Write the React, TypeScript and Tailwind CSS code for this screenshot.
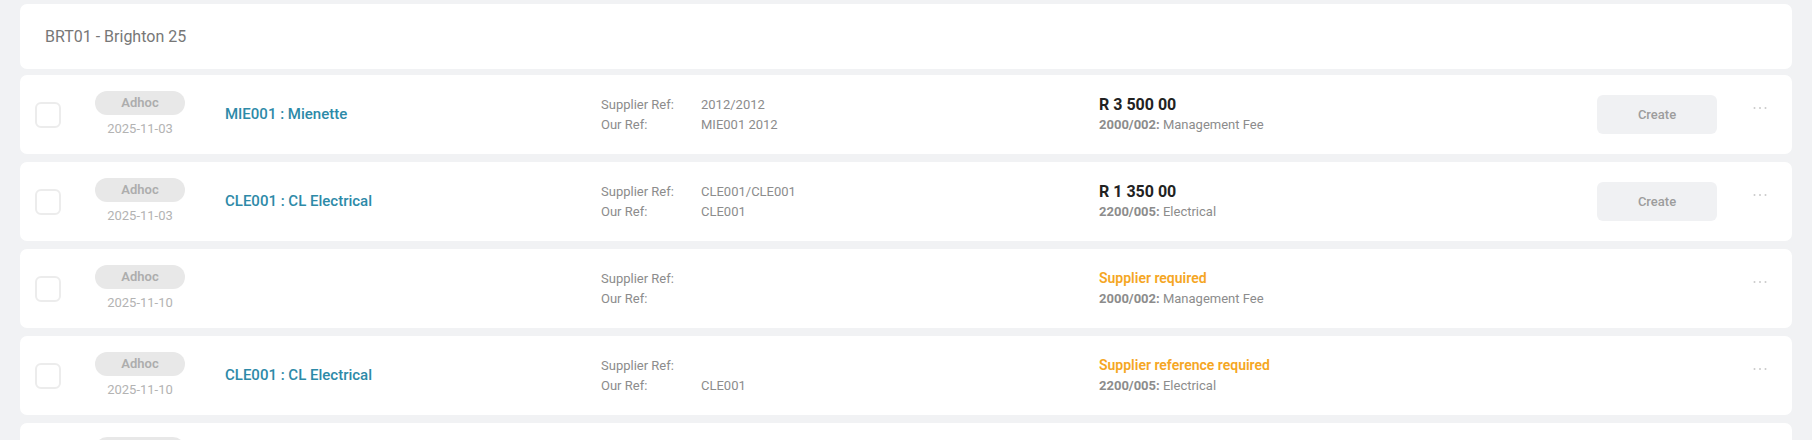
import React from 'react'

type RowT = {
  date: string
  supplier?: string
  supplierRef?: string
  ourRef?: string
  amount?: string
  warning?: string
  account: string
  accountName: string
  canCreate: boolean
}

const rows: RowT[] = [
  {
    date: '2025-11-03',
    supplier: 'MIE001 : Mienette',
    supplierRef: '2012/2012',
    ourRef: 'MIE001 2012',
    amount: 'R 3 500 00',
    account: '2000/002:',
    accountName: 'Management Fee',
    canCreate: true,
  },
  {
    date: '2025-11-03',
    supplier: 'CLE001 : CL Electrical',
    supplierRef: 'CLE001/CLE001',
    ourRef: 'CLE001',
    amount: 'R 1 350 00',
    account: '2200/005:',
    accountName: 'Electrical',
    canCreate: true,
  },
  {
    date: '2025-11-10',
    warning: 'Supplier required',
    account: '2000/002:',
    accountName: 'Management Fee',
    canCreate: false,
  },
  {
    date: '2025-11-10',
    supplier: 'CLE001 : CL Electrical',
    ourRef: 'CLE001',
    warning: 'Supplier reference required',
    account: '2200/005:',
    accountName: 'Electrical',
    canCreate: false,
  },
]

function MoreDots() {
  return (
    <svg width="14" height="4" viewBox="0 0 14 4" className="block">
      <circle cx="1.5" cy="2" r="1" fill="#cacaca" />
      <circle cx="7" cy="2" r="1" fill="#cacaca" />
      <circle cx="12.5" cy="2" r="1" fill="#cacaca" />
    </svg>
  )
}

function DraftRow({ row }: { row: RowT }) {
  return (
    <div className="flex h-[79px] items-center rounded-[7px] bg-white pl-[15px]">
      <span className="h-[26px] w-[26px] shrink-0 rounded-[6px] border-2 border-[#ececec] bg-white" />

      <div className="ml-[34px] flex w-[90px] shrink-0 flex-col items-center">
        <span className="flex h-[24px] w-[90px] items-center justify-center rounded-full bg-[#e8e8e8] text-[13px] font-semibold text-[#adadad]">
          Adhoc
        </span>
        <span className="mt-[5px] text-[13px] leading-[18px] text-[#b3b3b3]">{row.date}</span>
      </div>

      <div className="ml-[40px] w-[376px] shrink-0 text-[15px] font-medium text-[#2d8aa8]">
        {row.supplier}
      </div>

      <div className="w-[498px] shrink-0 text-[13px] leading-[20px] text-[#8c8c8c]">
        <div className="flex">
          <span className="w-[100px]">Supplier Ref:</span>
          <span>{row.supplierRef}</span>
        </div>
        <div className="flex">
          <span className="w-[100px]">Our Ref:</span>
          <span>{row.ourRef}</span>
        </div>
      </div>

      <div className="w-[498px] shrink-0">
        {row.amount ? (
          <div className="text-[16px] font-bold leading-[21px] text-[#222]">{row.amount}</div>
        ) : (
          <div className="text-[14px] font-semibold leading-[21px] text-[#f5a623]">{row.warning}</div>
        )}
        <div className="text-[13px] leading-[20px] text-[#8c8c8c]">
          <span className="font-bold">{row.account}</span> {row.accountName}
        </div>
      </div>

      <div className="w-[120px] shrink-0">
        {row.canCreate && (
          <button className="flex h-[39px] w-[120px] items-center justify-center rounded-[6px] bg-[#f0f1f3] text-[13px] font-medium text-[#9d9d9d]">
            Create
          </button>
        )}
      </div>

      <div className="ml-[36px] self-start pt-[31px]">
        <MoreDots />
      </div>
    </div>
  )
}

export default function App() {
  return (
    <div className="h-[440px] overflow-hidden bg-[#f1f2f4] px-[20px] pt-[4px] font-['Roboto',sans-serif]">
      <div className="flex h-[65px] items-center rounded-[7px] bg-white px-[25px] text-[16px] text-[#777]">
        BRT01 - Brighton 25
      </div>
      <div className="mt-[6px] flex flex-col gap-[8px]">
        {rows.map((row, i) => (
          <DraftRow key={i} row={row} />
        ))}
        {/* next row, only its top edge is in view */}
        <div className="h-[79px] rounded-[7px] bg-white pl-[75px] pt-[14px]">
          <span className="block h-[24px] w-[90px] rounded-full bg-[#e8e8e8]" />
        </div>
      </div>
    </div>
  )
}
